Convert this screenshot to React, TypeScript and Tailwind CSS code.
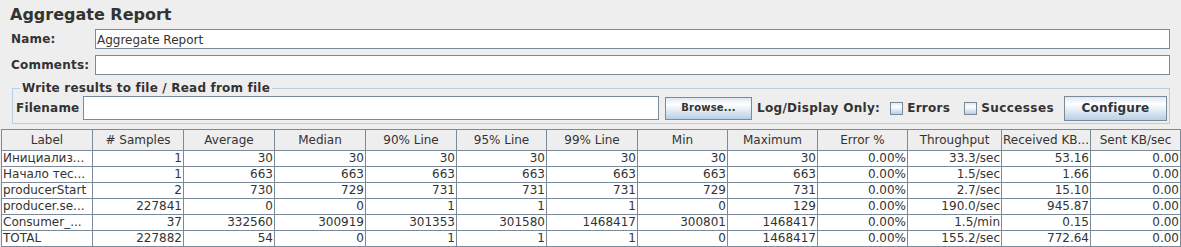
import React from "react";

const headers = [
  "Label",
  "# Samples",
  "Average",
  "Median",
  "90% Line",
  "95% Line",
  "99% Line",
  "Min",
  "Maximum",
  "Error %",
  "Throughput",
  "Received KB...",
  "Sent KB/sec",
];

const rows: string[][] = [
  ["Инициализ...", "1", "30", "30", "30", "30", "30", "30", "30", "0.00%", "33.3/sec", "53.16", "0.00"],
  ["Начало тес...", "1", "663", "663", "663", "663", "663", "663", "663", "0.00%", "1.5/sec", "1.66", "0.00"],
  ["producerStart", "2", "730", "729", "731", "731", "731", "729", "731", "0.00%", "2.7/sec", "15.10", "0.00"],
  ["producer.se...", "227841", "0", "0", "1", "1", "1", "0", "129", "0.00%", "190.0/sec", "945.87", "0.00"],
  ["Consumer_...", "37", "332560", "300919", "301353", "301580", "1468417", "300801", "1468417", "0.00%", "1.5/min", "0.15", "0.00"],
  ["TOTAL", "227882", "54", "0", "1", "1", "1", "0", "1468417", "0.00%", "155.2/sec", "772.64", "0.00"],
];

const gridCols =
  "grid grid-cols-[91px_91px_91px_91px_91px_90px_91px_90px_90px_90px_94px_89px_90px]";

function Checkbox() {
  return (
    <span className="inline-block w-[13px] h-[13px] border border-[#7a8a99] bg-[linear-gradient(180deg,#dde8f3_0%,#ffffff_35%,#b8cfe5_100%)]" />
  );
}

export default function App() {
  return (
    <div
      className="w-[1181px] h-[247px] overflow-hidden bg-[#eeeeee] text-[#333333] pt-[5px]"
      style={{ fontFamily: '"DejaVu Sans", sans-serif' }}
    >
      <div className="pl-[10px] h-[19px] leading-[19px] text-[16px] font-bold text-[#333333]">
        Aggregate Report
      </div>

      <div className="flex items-start mt-[5px] h-[20px] pl-[11px] pr-[11px]">
        <span className="w-[84px] text-[12px] leading-[14px] font-bold mt-[3px] tracking-[0.2px]">Name:</span>
        <div className="flex-1 h-[20px] border border-[#7a8a99] bg-white pl-[1px] pt-[3px] text-[12px] leading-[14px] font-normal">
          Aggregate Report
        </div>
      </div>

      <div className="flex items-start mt-[6px] h-[20px] pl-[11px] pr-[11px]">
        <span className="w-[84px] text-[12px] leading-[14px] font-bold mt-[3px] tracking-[0.2px]">Comments:</span>
        <div className="flex-1 h-[20px] border border-[#7a8a99] bg-white" />
      </div>

      <fieldset className="ml-[12px] w-[1158px] mt-[6px] border border-[#b8cfe5] pl-[3px] pr-[2px] pb-[3px] pt-[1px]">
        <legend className="ml-[4px] px-[2px] text-[12px] leading-[14px] font-bold tracking-[0.2px]">
          Write results to file / Read from file
        </legend>
        <div className="flex items-center h-[24px]">
          <span className="text-[12px] leading-[14px] font-bold mr-[4px] tracking-[0.2px]">Filename</span>
          <div className="flex-1 h-[24px] border border-[#7a8a99] bg-white" />
          <button className="ml-[6px] h-[23px] w-[87px] border border-[#7a8a99] bg-[linear-gradient(180deg,#dde8f3_0%,#ffffff_30%,#b8cfe5_100%)] text-[10px] leading-[12px] font-bold text-[#333333] tracking-[0.2px]">
            Browse...
          </button>
          <span className="ml-[5px] text-[12px] leading-[14px] font-bold tracking-[0.3px]">Log/Display Only:</span>
          <span className="ml-[10px] flex items-center">
            <Checkbox />
            <span className="ml-[4px] text-[12px] leading-[14px] font-bold tracking-[0.3px]">Errors</span>
          </span>
          <span className="ml-[14px] flex items-center">
            <Checkbox />
            <span className="ml-[4px] text-[12px] leading-[14px] font-bold tracking-[0.4px]">Successes</span>
          </span>
          <button className="ml-[10px] h-[25px] w-[103px] border border-[#7a8a99] bg-[linear-gradient(180deg,#dde8f3_0%,#ffffff_30%,#b8cfe5_100%)] text-[12px] leading-[14px] font-bold text-[#333333] tracking-[0.2px]">
            Configure
          </button>
        </div>
      </fieldset>

      <div className="ml-[1px] mt-[5px] w-[1180px] border-l border-t border-[#7a8a99] text-[12px] text-[#333333]">
        <div className={gridCols}>
          {headers.map((h) => (
            <div
              key={h}
              className="h-[21px] leading-[20px] text-center border-r border-b border-[#7a8a99] bg-[#eeeeee] whitespace-nowrap overflow-hidden"
            >
              {h}
            </div>
          ))}
        </div>
        {rows.map((r, i) => (
          <div key={i} className={gridCols + " bg-white"}>
            {r.map((c, j) => (
              <div
                key={j}
                className={
                  "h-[16px] leading-[15px] border-r border-b border-[#7a8a99] whitespace-nowrap overflow-hidden " +
                  (j === 0 ? "text-left pl-[1px]" : "text-right pr-[1px]")
                }
              >
                {c}
              </div>
            ))}
          </div>
        ))}
      </div>
    </div>
  );
}
